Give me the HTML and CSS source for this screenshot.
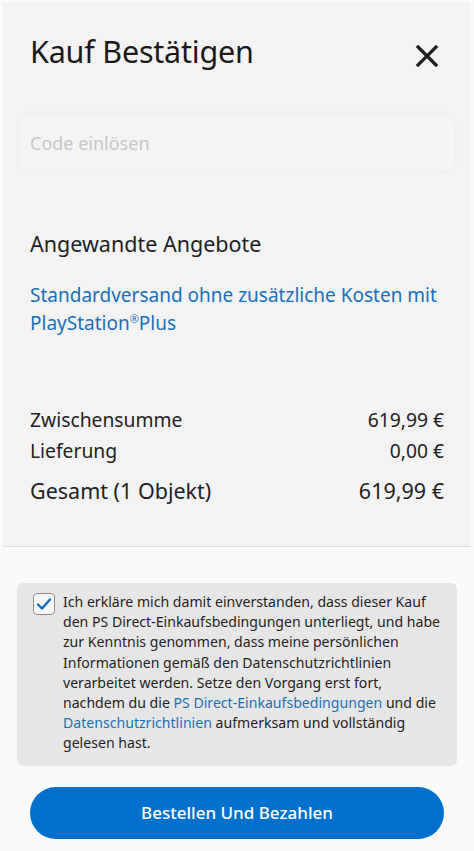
FILE: index.html
```html
<!DOCTYPE html>
<html lang="de">
<head>
<meta charset="utf-8">
<link rel="stylesheet" href="styles.css">
</head>
<body>
<div class="page">
  <section class="panel">
    <header class="head">
      <h1 class="title">Kauf Bestätigen</h1>
      <svg class="close" width="24" height="24" viewBox="0 0 24 24"><path d="M3 3 L21 21 M21 3 L3 21" stroke="#1f1f1f" stroke-width="3.2" stroke-linecap="square"/></svg>
    </header>
    <div class="code">Code einlösen</div>
    <h2 class="offers">Angewandte Angebote</h2>
    <p class="offer-link">Standardversand ohne zusätzliche Kosten mit PlayStation<span class="reg">®</span>Plus</p>
    <div class="sums">
      <div class="row"><span>Zwischensumme</span><span>619,99 €</span></div>
      <div class="row"><span>Lieferung</span><span>0,00 €</span></div>
      <div class="row total"><span>Gesamt (1 Objekt)</span><span>619,99 €</span></div>
    </div>
  </section>
  <section class="bottom">
    <div class="consent">
      <span class="check"><svg width="16" height="14" viewBox="0 0 16 14"><path d="M2 7.5 L6 11.5 L14 2.5" fill="none" stroke="#0a6ec8" stroke-width="2.4" stroke-linecap="round" stroke-linejoin="round"/></svg></span>
      <p class="consent-text">Ich erkläre mich damit einverstanden, dass dieser Kauf den PS Direct-Einkaufsbedingungen unterliegt, und habe zur Kenntnis genommen, dass meine persönlichen Informationen gemäß den Datenschutzrichtlinien verarbeitet werden. Setze den Vorgang erst fort, nachdem du die <a class="lnk">PS Direct-Einkaufsbedingungen</a> und die <a class="lnk">Datenschutzrichtlinien</a> aufmerksam und vollständig gelesen hast.</p>
    </div>
    <button class="pay">Bestellen Und Bezahlen</button>
  </section>
</div>
</body>
</html>
```
FILE: styles.css
```css
* { box-sizing: border-box; }
html, body { margin: 0; padding: 0; }
body {
  background: #fafafa;
  font-family: "Noto Sans", "Open Sans", sans-serif;
  color: #1f1f1f;
  width: 474px;
  height: 851px;
  overflow: hidden;
}
.page { padding: 2px 3px 0 3px; }
.panel {
  background: #f3f3f3;
  height: 545px;
  border-bottom: 1px solid #dcdcdc;
  padding: 0 27px;
  display: flex;
  flex-direction: column;
}
.head {
  display: flex;
  justify-content: space-between;
  align-items: center;
  height: 98px;
}
.title {
  margin: 0;
  font-weight: 400;
  font-size: 30.5px;
  line-height: 40px;
  letter-spacing: -0.2px;
  color: #1a1a1a;
}
.close { margin-right: 5px; margin-top: 10px; }
.code {
  margin: 15px -10px 0 -10px;
  height: 56px;
  border-radius: 8px;
  background: #f4f4f4;
  box-shadow: 0 0 6px rgba(0,0,0,0.03);
  padding-left: 10px;
  display: flex;
  align-items: center;
  font-size: 18px;
  color: #c6c6c6;
}
.offers {
  margin: 58px 0 0 0;
  font-weight: 400;
  font-size: 21.5px;
  line-height: 30px;
  color: #1f1f1f;
}
.offer-link {
  margin: 22px 0 0 0;
  font-size: 19px;
  line-height: 28px;
  color: #1a6fba;
}
.reg { font-size: 11px; line-height: 1; position: relative; top: -7px; }
.sums { margin-top: 67px; }
.row {
  display: flex;
  justify-content: space-between;
  font-size: 19.3px;
  line-height: 31px;
  color: #222;
}
.total { font-size: 21.5px; line-height: 30px; margin-top: 10px; }
.bottom { padding: 36px 14px 0 14px; }
.consent {
  background: #e6e6e6;
  border-radius: 6px;
  padding: 9px 12px 12px 16px;
  display: flex;
  gap: 8px;
  align-items: flex-start;
}
.check {
  flex: none;
  width: 22px;
  height: 22px;
  border: 1.5px solid #8a8a8a;
  border-radius: 4px;
  background: #f6f6f6;
  display: flex;
  align-items: center;
  justify-content: center;
  margin-top: 1px;
}
.consent-text {
  margin: 0;
  font-size: 14.1px;
  line-height: 20.2px;
  color: #1f1f1f;
}
.lnk { color: #1a6fba; }
.pay {
  display: block;
  margin: 21px 13px 0 13px;
  width: calc(100% - 26px);
  height: 52px;
  border: none;
  border-radius: 26px;
  background: #0070cc;
  color: #fff;
  font-family: "Noto Sans", "Open Sans", sans-serif;
  font-size: 17px;
  font-weight: 500;
  padding-bottom: 2px;
}
```
